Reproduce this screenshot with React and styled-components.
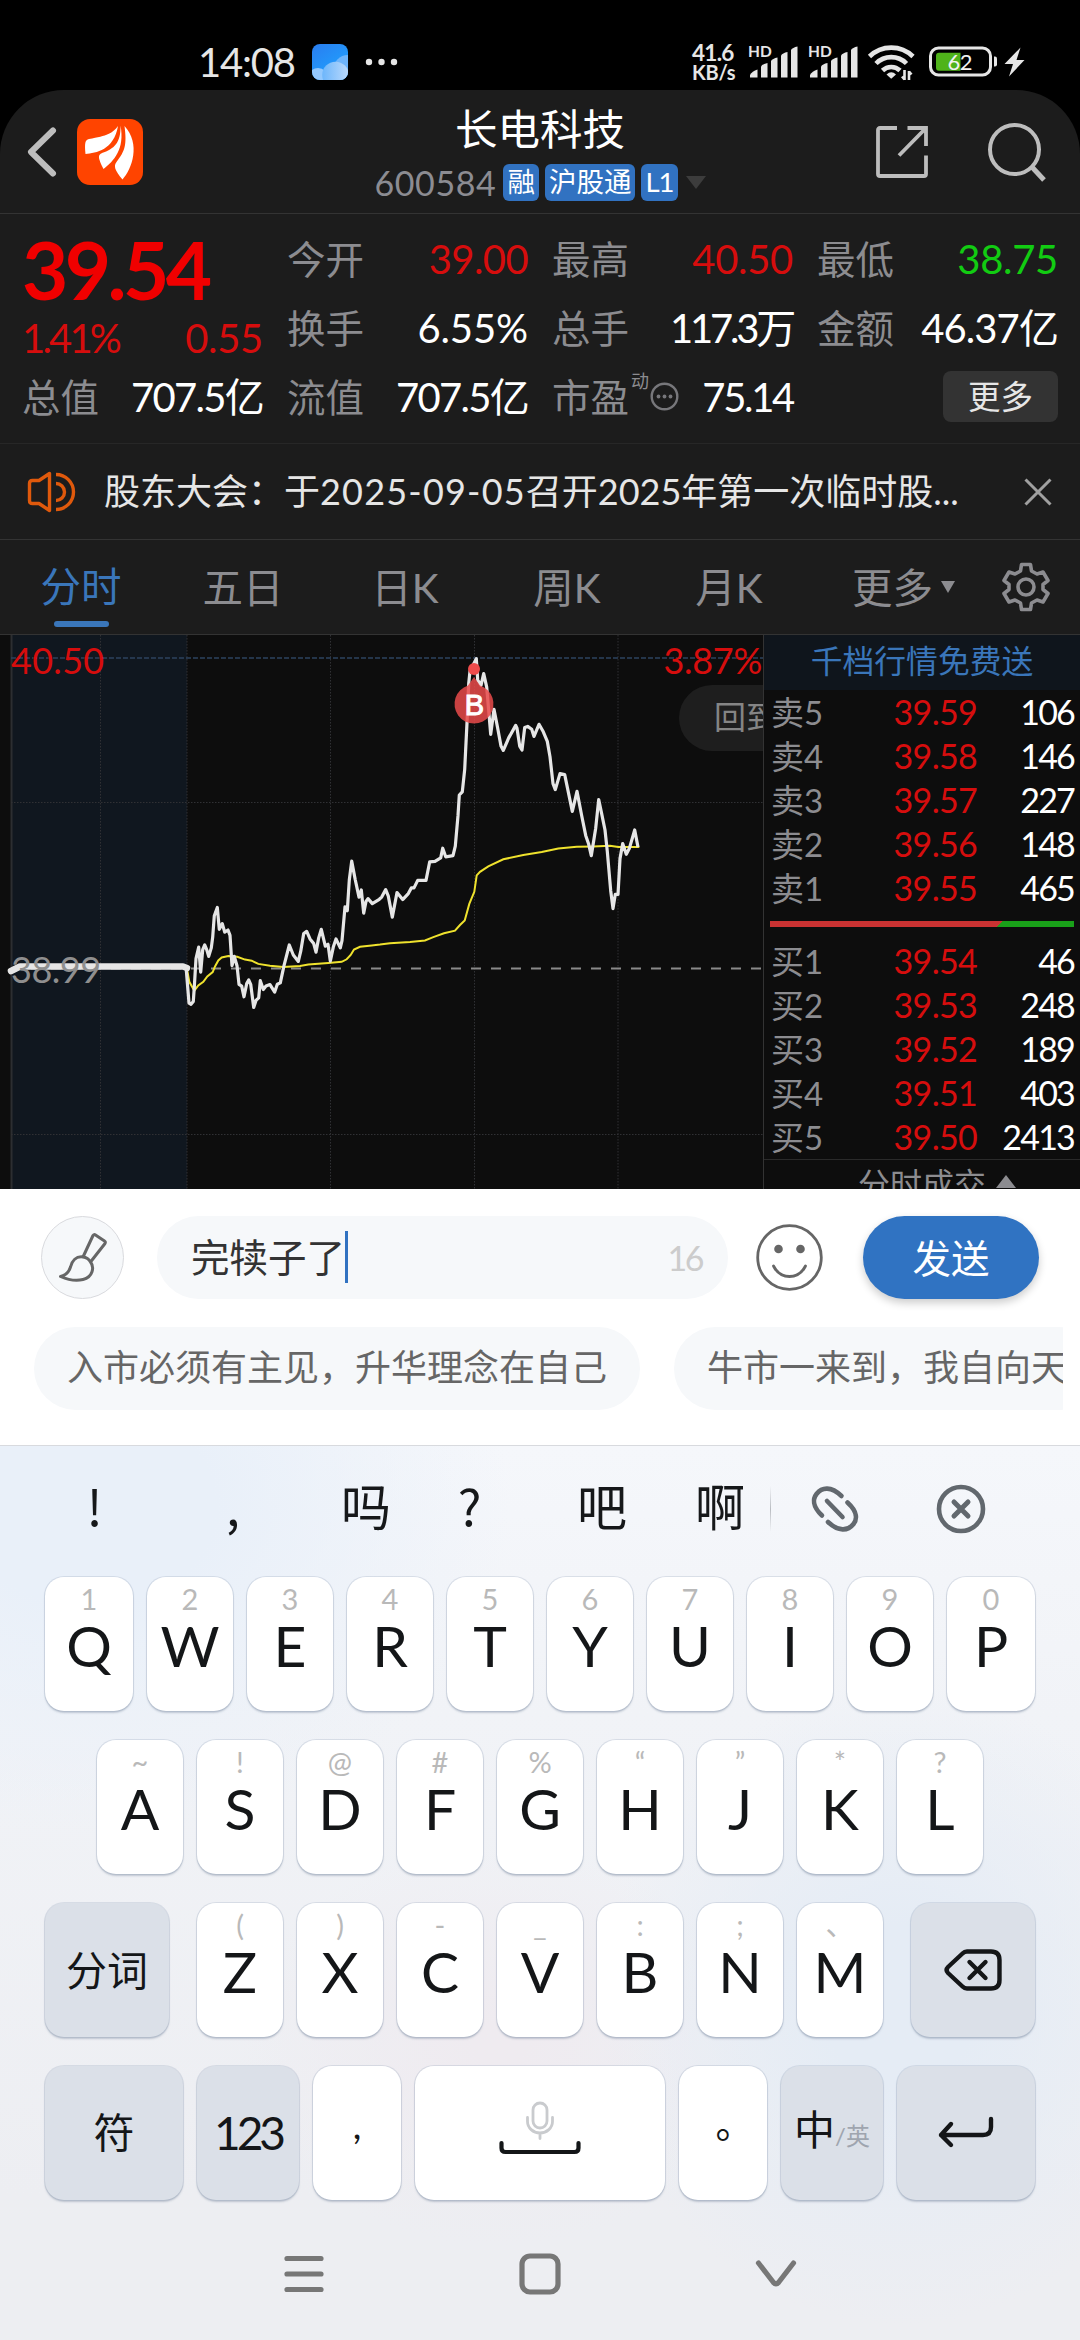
import React from 'react';
import styled, { createGlobalStyle } from 'styled-components';

const GlobalStyle = createGlobalStyle`
  * {
    box-sizing: border-box;
  }

  body {
    margin: 0;
    background: #000;
    font-family: Lato, "Noto Sans CJK SC", sans-serif;
    -webkit-font-smoothing: antialiased;
  }

  svg {
    display: block;
    flex-shrink: 0;
    overflow: visible;
  }
`;

const Screen = styled.div`
  width: 1080px;
  height: 2340px;
  display: flex;
  flex-direction: column;
  overflow: hidden;
  background: #000;
  white-space: nowrap;
`;

/* ---------- status bar ---------- */

const StatusBar = styled.div`
  height: 90px;
  flex-shrink: 0;
  display: flex;
  justify-content: space-between;
  padding: 42px 54px 0 198px;
  color: #e6e6e6;
`;

const StatusGroup = styled.div`
  display: flex;
  align-items: center;
  height: 40px;
`;

const Clock = styled.div`
  width: 114px;
  font-size: 40px;
  line-height: 40px;
  letter-spacing: -1.2px;
`;

const NetSpeed = styled.div`
  width: 56px;
  display: flex;
  flex-direction: column;
  font-size: 22.5px;
  font-weight: 700;
  line-height: 20px;
  letter-spacing: -0.7px;
`;

const NetUnit = styled.span`
  font-size: 20px;
  line-height: 18px;
  letter-spacing: -0.2px;
`;

const SignalWrap = styled.div`
  display: flex;
  align-items: flex-start;
  width: 50px;
  height: 34px;
  margin-right: 10px;
`;

const HdBadge = styled.div`
  width: 24px;
  margin-right: -24px;
  font-size: 15.5px;
  font-weight: 700;
  line-height: 13px;
`;

const BatteryText = styled.text`
  font-size: 22px;
  letter-spacing: -0.5px;
  fill: #f2f2f2;
`;

/* ---------- stock header ---------- */

const Stock = styled.div`
  height: 1099px;
  flex-shrink: 0;
  display: flex;
  flex-direction: column;
  overflow: hidden;
  border-radius: 64px 64px 0 0;
  background: #1c1c1c;
`;

const Header = styled.header`
  height: 124px;
  flex-shrink: 0;
  display: flex;
  align-items: center;
  justify-content: space-between;
  padding: 0 34px 0 27px;
  border-bottom: 1px solid #333;
`;

const HeaderSide = styled.div`
  width: ${(p) => (p.$end ? 170 : 177)}px;
  display: flex;
  align-items: center;
  justify-content: ${(p) => (p.$end ? 'space-between' : 'flex-start')};
  gap: 20px;
`;

const HeaderTitle = styled.div`
  display: flex;
  flex-direction: column;
  align-items: center;
  height: 124px;
  padding-top: 16px;
`;

const StockName = styled.h1`
  margin: 0;
  color: #fff;
  font-size: 42.5px;
  font-weight: 400;
  line-height: 46px;
`;

const StockMeta = styled.div`
  display: flex;
  align-items: center;
  gap: 6px;
  height: 38px;
  margin-top: 12px;
`;

const StockCode = styled.span`
  width: 123px;
  color: #8c8c92;
  font-size: 34px;
  line-height: 38px;
  letter-spacing: 0.6px;
`;

const Tag = styled.span`
  height: 37px;
  padding: 0 4px;
  border-radius: 6px;
  background: #3172c1;
  color: #fff;
  font-size: 27.5px;
  line-height: 36px;
  letter-spacing: ${(p) => p.$tight || 0};
`;

const Triangle = styled.span`
  width: 0;
  height: 0;
  margin-left: ${(p) => p.$gap}px;
  border: solid transparent;
  border-width: 0 ${(p) => p.$half}px;
  ${(p) => (p.$up ? 'border-bottom' : 'border-top')}: ${(p) => p.$tall}px solid ${(p) => p.$color};
`;

/* ---------- quote grid ---------- */

const Quote = styled.section`
  height: 230px;
  flex-shrink: 0;
  display: grid;
  grid-template-columns: repeat(4, 1fr);
  grid-template-rows: repeat(3, 69px);
  column-gap: 24px;
  padding: 10px 22px 0;
  border-bottom: 1px solid #272727;
`;

const PriceBlock = styled.div`
  grid-row: span 2;
  display: flex;
  flex-direction: column;
`;

const Price = styled.div`
  height: 91px;
  padding-top: 1px;
  color: #f00000;
  font-size: 80px;
  font-weight: 700;
  line-height: 88px;
  letter-spacing: -3.6px;
`;

const Change = styled.div`
  display: flex;
  justify-content: space-between;
  color: #d60d0d;
  font-size: 40px;
  line-height: 50px;
  letter-spacing: -2.8px;

  span + span {
    letter-spacing: -0.3px;
  }
`;

const Cell = styled.div`
  display: flex;
  align-items: center;
  justify-content: space-between;
`;

const Label = styled.span`
  display: flex;
  align-items: center;
  color: #8c8c90;
  font-size: 38.5px;
  line-height: 50px;
`;

const Sup = styled.sup`
  align-self: flex-start;
  font-size: 18px;
  line-height: 18px;
  margin: 0 1px 0 2px;
`;

const Value = styled.span`
  color: ${(p) => p.$color || '#fff'};
  font-size: 40px;
  line-height: 50px;
  letter-spacing: ${(p) => p.$track || '-0.6px'};
`;

const MoreButton = styled.button`
  justify-self: end;
  align-self: center;
  width: 115px;
  height: 51px;
  padding: 0;
  border: 0;
  border-radius: 8px;
  background: #333;
  color: #e6e6e6;
  font-family: inherit;
  font-size: 32.5px;
  line-height: 50px;
`;

/* ---------- notice ---------- */

const Notice = styled.div`
  height: 96px;
  flex-shrink: 0;
  display: flex;
  align-items: center;
  padding: 0 28px;
  border-bottom: 1px solid #333;
`;

const NoticeText = styled.p`
  flex: 1;
  margin: -2px 0 0 29px;
  color: #e6e6e6;
  font-size: 36px;
  line-height: 50px;
`;

const DateText = styled.span`
  letter-spacing: 1.2px;
`;

/* ---------- tabs ---------- */

const Tabs = styled.nav`
  height: 95px;
  flex-shrink: 0;
  display: flex;
  border-bottom: 1px solid #333;
`;

const Tab = styled.div`
  width: ${(p) => p.$w || 162}px;
  height: 94px;
  display: flex;
  align-items: center;
  justify-content: ${(p) => (p.$active ? 'flex-start' : 'center')};
  flex-direction: ${(p) => (p.$active ? 'column' : 'row')};
  color: ${(p) => (p.$active ? '#3a76ba' : '#8c8c90')};
  font-size: 40.5px;
  line-height: 93px;

  &::after {
    content: '';
    display: ${(p) => (p.$active ? 'block' : 'none')};
    width: 55px;
    height: 6px;
    margin-top: -12px;
    flex-shrink: 0;
    border-radius: 3px;
    background: #3a76ba;
  }
`;

/* ---------- chart + order book ---------- */

const Market = styled.section`
  height: 554px;
  flex-shrink: 0;
  display: flex;
  overflow: hidden;
  background: #0d0d0d;
`;

const ChartPane = styled.div`
  position: relative;
  width: 764px;
  height: 554px;
  flex-shrink: 0;
  overflow: hidden;
  border-right: 1px solid #333;
`;

const ChartLabel = styled.span`
  position: absolute;
  left: ${(p) => (p.$right ? 'auto' : '11px')};
  right: ${(p) => (p.$right ? '1px' : 'auto')};
  top: ${(p) => p.$top}px;
  color: ${(p) => p.$color};
  font-size: 36px;
  line-height: 40px;
  letter-spacing: ${(p) => p.$track};
`;

const BackPill = styled.div`
  position: absolute;
  left: 679px;
  top: 50px;
  width: 180px;
  height: 66px;
  padding-left: 35px;
  border-radius: 33px;
  background: #1e1e1e;
  color: #858585;
  font-size: 32px;
  line-height: 64px;
`;

const Book = styled.div`
  width: 316px;
  display: flex;
  flex-direction: column;
`;

const BookPromo = styled.div`
  height: 55px;
  flex-shrink: 0;
  background: #0f151c;
  color: #3a76ba;
  font-size: 31.8px;
  line-height: 53px;
  text-align: center;
`;

const BookSide = styled.div`
  flex-shrink: 0;
  padding: 0 6px 0 7px;
`;

const BookRow = styled.div`
  height: 44px;
  display: grid;
  grid-template-columns: 80px 1fr 97px;
  align-items: center;
  line-height: 44px;
  font-size: 34px;
`;

const BookLabel = styled.span`
  color: #8c8c90;
  font-size: 33px;
`;

const BookPrice = styled.span`
  color: #d60d0d;
  text-align: right;
  letter-spacing: -0.7px;
`;

const BookVolume = styled.span`
  color: #fff;
  text-align: right;
  letter-spacing: -1.8px;
`;

const RatioBar = styled.div`
  height: 6px;
  flex-shrink: 0;
  margin: 11px 6px 12px;
  background: linear-gradient(135deg, #c93232 0 75%, #19a019 75.2%);
`;

const BookFooter = styled.div`
  height: 30px;
  flex-shrink: 0;
  display: flex;
  padding: 6px 0 0 94px;
  border-top: 1px solid #2a2a2a;
  color: #8c8c90;
  font-size: 32px;
  line-height: 36px;

  ${Triangle} {
    margin-top: 9px;
  }
`;

/* ---------- comment composer ---------- */

const Composer = styled.section`
  height: 256px;
  flex-shrink: 0;
  padding-top: 27px;
  background: #fff;
`;

const ComposerRow = styled.div`
  display: flex;
  align-items: center;
  height: 83px;
  padding: 0 41px;
`;

const BrushButton = styled.div`
  width: 83px;
  height: 83px;
  display: flex;
  align-items: center;
  justify-content: center;
  border: 1px solid #d9dade;
  border-radius: 50%;
  background: #f6f8fa;
`;

const InputBox = styled.div`
  width: 571px;
  height: 83px;
  margin: 0 28px 0 33px;
  padding: 0 26px 0 34px;
  display: flex;
  align-items: center;
  border-radius: 42px;
  background: #f6f8fa;
  color: #333;
  font-size: 38.5px;
  line-height: 79px;
`;

const Caret = styled.span`
  width: 3px;
  height: 52px;
  margin-top: -2px;
  background: #3172c1;
`;

const Counter = styled.span`
  margin-left: auto;
  color: #ccc;
  font-size: 34px;
  letter-spacing: -2.5px;
`;

const SendButton = styled.button`
  width: 176px;
  height: 83px;
  margin-left: auto;
  padding: 0;
  border: 0;
  border-radius: 42px;
  background: #3073c2;
  box-shadow: 0 4px 8px rgba(0, 0, 0, 0.2);
  color: #fff;
  font-family: inherit;
  font-size: 38.5px;
  font-weight: 400;
  line-height: 78px;
`;

const Chips = styled.div`
  display: flex;
  gap: 34px;
  margin: 28px 17px 0 34px;
  overflow: hidden;
`;

const Chip = styled.div`
  height: 83px;
  flex-shrink: 0;
  padding: 0 33px;
  border-radius: 42px;
  background: #f6f8fa;
  color: #666;
  font-size: 36px;
  line-height: 80px;
`;

/* ---------- keyboard ---------- */

const Keyboard = styled.section`
  height: 895px;
  flex-shrink: 0;
  border-top: 1px solid #d8dade;
  background:
    radial-gradient(ellipse 420px 330px at 90px 60px, #e9f0f9 30%, rgba(233, 240, 249, 0) 100%),
    radial-gradient(ellipse 300px 320px at 900px 560px, #e5ecf5 25%, rgba(229, 236, 245, 0) 100%),
    radial-gradient(ellipse 260px 200px at 500px 600px, #efebf0 10%, rgba(239, 235, 240, 0) 100%),
    linear-gradient(#f5f7fb 0, #f1f3f7 30%, #edeef2 84%);
`;

const Candidates = styled.div`
  height: 125px;
  display: flex;
  align-items: center;
`;

const Candidate = styled.div`
  width: ${(p) => p.$w || 118}px;
  padding-right: ${(p) => p.$shift || 0}px;
  color: #16181a;
  font-family: "Noto Sans CJK SC", sans-serif;
  font-size: 50px;
  line-height: 120px;
  text-align: center;
  height: 129px;
`;

const CandidateDivider = styled.div`
  width: 1px;
  height: 46px;
  margin: 0 41px 0 -9px;
  background: linear-gradient(transparent, #b9bcc1, transparent);
`;

const KeyRow = styled.div`
  display: flex;
  gap: 14px;
  height: 134px;
  margin: ${(p) => p.$top}px 45px 0;
  padding: 0 ${(p) => p.$inset || 0}px;
`;

const Key = styled.div`
  width: ${(p) => p.$w || 86}px;
  margin-left: ${(p) => p.$gap || 0}px;
  height: 134px;
  flex-shrink: 0;
  display: flex;
  flex-direction: column;
  align-items: center;
  justify-content: ${(p) => (p.$letter ? 'flex-start' : 'center')};
  padding-bottom: ${(p) => p.$lift || 0}px;
  border-radius: 19px;
  background: ${(p) => (p.$dark ? '#dbe0e8' : '#fff')};
  box-shadow: 0 0 0 1px rgba(150, 165, 185, 0.28), 0 2px 2px rgba(110, 125, 150, 0.38);
  color: #141618;
  font-size: ${(p) => p.$size || 41}px;
  letter-spacing: ${(p) => p.$track || 0};
`;

const Hint = styled.span`
  margin-top: 4px;
  font-size: 29px;
  line-height: 36px;
  color: #b9b9b9;
`;

const Letter = styled.span`
  color: #141618;
  font-size: 57px;
  line-height: 56px;
`;

const Comma = styled.span`
  height: 60px;
  margin-top: -2px;
  font-size: 38px;
  line-height: 44px;
`;

const FullStop = styled.span`
  padding-left: 23px;
  font-family: "Noto Sans CJK SC", sans-serif;
  font-size: 38px;
  line-height: 44px;
  margin-top: -22px;
`;

const LangRow = styled.span`
  display: flex;
  align-items: baseline;
  margin-top: -12px;

  small {
    color: #9fa5af;
    font-size: 24px;
  }
`;

const NavBar = styled.div`
  display: flex;
  align-items: center;
  justify-content: center;
  gap: 194px;
  height: 140px;
  padding-top: 8px;
`;

/* ---------- icons ---------- */

const SignalIcon = () => (
  <SignalWrap>
    <HdBadge>HD</HdBadge>
    <svg width="50" height="34" viewBox="0 0 50 34" fill="#e6e6e6">
      <path d="M2 32.500v-2.500q2-4 7.500-5.500v8z" />
      <path d="M13 32.500v-11q1.500-2.500 6.500-3.500v14.500z" />
      <path d="M23 32.500v-16.500q1.500-2.500 6.500-3.500v20z" />
      <path d="M33 32.500v-22q1.500-2.500 6.500-3.500v25.500z" />
      <path d="M43 32.500v-27.500q1.500-2.500 6.500-3.500v31z" />
    </svg>
  </SignalWrap>
);

const WifiIcon = () => (
  <svg width="47" height="34" viewBox="0 0 47 34" fill="none" stroke="#e6e6e6" strokeWidth="4.600">
    <path d="M1.500 11.500a31 31 0 0 1 43.500 0" />
    <path d="M8 18.500a21.500 21.500 0 0 1 30.500 0" />
    <path d="M14.500 25.500a12.500 12.500 0 0 1 17.500 0" />
    <path d="M18.500 29.500q4.800-4.500 9.500 0l-4.800 4.300z" fill="#e6e6e6" stroke="none" />
    <path d="M36.500 25v10M34 31.500l2.500 3M41 35v-9M43.500 29.500l-2.500-3" strokeWidth="2.600" />
  </svg>
);

const BatteryIcon = () => (
  <svg width="97" height="32" viewBox="0 0 97 32">
    <rect x="1.500" y="2" width="60" height="27" rx="8" fill="none" stroke="#e6e6e6" strokeWidth="3" />
    <path d="M10 6.700h21.500v18h-21.500q-3 0-3-3v-12q0-3 3-3z" fill="#4fb31a" />
    <BatteryText x="18.500" y="23.500">62</BatteryText>
    <path d="M65 10.500h1q2 0 2 2v6q0 2-2 2h-1z" fill="#e6e6e6" />
    <path d="M91.500 1.500L75.500 18h8.500L80 30.500 95.500 14h-8z" fill="#e6e6e6" />
  </svg>
);

const WeatherIcon = () => (
  <svg width="36" height="36" viewBox="0 0 36 36">
    <defs>
      <linearGradient id="sky" x1="0" y1="0" x2="0.700" y2="1">
        <stop offset="0" stopColor="#2a7df0" />
        <stop offset="1" stopColor="#1ea4ff" />
      </linearGradient>
      <linearGradient id="cloud" x1="0" y1="0" x2="1" y2="0">
        <stop offset="0" stopColor="#6db6fb" />
        <stop offset="1" stopColor="#bcdafc" />
      </linearGradient>
      <clipPath id="tile"><rect width="36" height="36" rx="8" /></clipPath>
    </defs>
    <g clipPath="url(#tile)">
      <rect width="36" height="36" fill="url(#sky)" />
      <circle cx="36" cy="26" r="15" fill="#6db4fb" />
      <circle cx="6" cy="34" r="10" fill="#93c8fd" />
      <circle cx="23.500" cy="31" r="13.300" fill="url(#cloud)" />
    </g>
  </svg>
);

const LogoIcon = () => (
  <svg width="66" height="66" viewBox="0 0 66 66">
    <rect width="66" height="66" rx="13" fill="#ff4400" />
    <g fill="#fff">
      <path d="M41 7C36 14 30 17 12 20c-4 1-4.500 4-3.500 15C19 34 37 31 41 7z" />
      <path d="M43.500 6.500C44 24 37 30 25 34c-4 2-4.500 4 1.500 16C37 42 48 30 43.500 6.500z" />
      <path d="M47.500 7C50 26 48 32 39.500 43c-3 4-2 8 6 17.500C55 50 64 25 47.500 7z" />
    </g>
  </svg>
);

const BackIcon = () => (
  <svg width="30" height="52" viewBox="0 0 30 52" fill="none" stroke="#bdbdbd" strokeWidth="6" strokeLinecap="round" strokeLinejoin="round">
    <path d="M26 4.500L4 26l22 21.500" />
  </svg>
);

const ShareIcon = () => (
  <svg width="52" height="52" viewBox="0 0 52 52" fill="none" stroke="#bdbdbd" strokeWidth="3.800">
    <path d="M21 2H4q-2 0-2 2v44q0 2 2 2h44q2 0 2-2V29.500" />
    <path d="M31.500 2H50v18M49.500 2.500L23 29.500" />
  </svg>
);

const SearchIcon = () => (
  <svg width="58" height="58" viewBox="0 0 58 58" fill="none" stroke="#bdbdbd" strokeWidth="4">
    <circle cx="26.500" cy="26.500" r="24.500" />
    <path d="M43.500 43.500L56 57" strokeWidth="5" />
  </svg>
);

const TipIcon = () => (
  <svg width="29" height="29" viewBox="0 0 29 29" fill="#77777b">
    <circle cx="14.500" cy="14.500" r="12.800" fill="none" stroke="#77777b" strokeWidth="2.400" />
    <circle cx="8.500" cy="14.500" r="1.900" />
    <circle cx="14.500" cy="14.500" r="1.900" />
    <circle cx="20.500" cy="14.500" r="1.900" />
  </svg>
);

const SpeakerIcon = () => (
  <svg width="47" height="40" viewBox="0 0 47 40" fill="none" stroke="#e0590c" strokeWidth="3.400">
    <path d="M21.500 1.500v37L11 31.500H4.500q-3 0-3-3v-17q0-3 3-3H11z" strokeLinejoin="round" />
    <path d="M28 2.500a17.500 17.500 0 0 1 0 35M28 11.500a8.500 8.500 0 0 1 0 17" />
  </svg>
);

const CloseIcon = () => (
  <svg width="28" height="28" viewBox="0 0 28 28" stroke="#a0a0a0" strokeWidth="3">
    <path d="M1.500 1.500l25 25M26.500 1.500l-25 25" />
  </svg>
);

const GearIcon = () => (
  <svg width="48" height="50" viewBox="0 0 48 50" fill="none" stroke="#8c8c90" strokeWidth="3.600" strokeLinejoin="round">
    <path d="M19.500 2.500h9l1 6.500 5.500 3L41 10l5 8.500L41 22.500v5l5 4-5 8.500-6-2-5.500 3-1 6.500h-9l-1-6.500-5.500-3-6 2-5-8.500 5-4v-5l-5-4L7 10l6 2 5.500-3z" />
    <circle cx="24" cy="25" r="8" />
  </svg>
);

const BrushIcon = () => (
  <svg width="48" height="50" viewBox="0 0 48 50" fill="none" stroke="#666" strokeWidth="3" strokeLinejoin="round">
    <path d="M24 24L34 2.500q1-1.500 2.500-0.500l9 6q1.500 1 .5 2.500L31.500 29" />
    <path d="M24 24c-7-1-11 4-12.500 10Q9 42 1.500 43.500 14 49 24 46.500C34 44 35.500 34 31.500 29Q29 24.500 24 24z" />
  </svg>
);

const SmileIcon = () => (
  <svg width="67" height="67" viewBox="0 0 67 67" fill="none" stroke="#666" strokeWidth="2.800">
    <circle cx="33.500" cy="33.500" r="31.800" />
    <circle cx="22.500" cy="25" r="4.300" fill="#666" stroke="none" />
    <circle cx="44.500" cy="25" r="4.300" fill="#666" stroke="none" />
    <path d="M17.500 42c7 14 25 14 32 0" strokeLinecap="round" />
  </svg>
);

const LinkIcon = () => (
  <svg width="46" height="46" viewBox="0 0 46 46" fill="none" stroke="#62686e" strokeWidth="4.600" strokeLinecap="round">
    <path d="M10 29.500C0 20 1 12.500 4.500 8 10 1 19 0 29.500 10" />
    <path d="M35.500 16.500C46 26 45 33.500 41.500 38 36 45 26.500 46 16 36" />
    <path d="M15 15l15.500 16" />
  </svg>
);

const DismissIcon = () => (
  <svg width="50" height="50" viewBox="0 0 50 50" fill="none" stroke="#62686e" strokeWidth="4.600" strokeLinecap="round">
    <circle cx="25" cy="25" r="22" />
    <path d="M18 18l14 14M32 18L18 32" strokeWidth="5" />
  </svg>
);

const BackspaceIcon = () => (
  <svg width="58" height="42" viewBox="0 0 58 42" fill="none" stroke="#141618" strokeWidth="4.400" strokeLinecap="round" strokeLinejoin="round">
    <path d="M23 2.500h24q8.500 0 8.500 8.500v20q0 8.500-8.500 8.500H23q-2.500 0-4.500-2L4 24Q1 21 4 18L18.500 4.500q2-2 4.500-2z" />
    <path d="M25.500 13l16 16M41.500 13l-16 16" />
  </svg>
);

const EnterIcon = () => (
  <svg width="56" height="32" viewBox="0 0 56 32" fill="none" stroke="#141618" strokeWidth="4.400" strokeLinecap="round" strokeLinejoin="round">
    <path d="M53 2v8q0 8-8 8H3M13 7L3 18l10 10" />
  </svg>
);

const SpaceIcon = () => (
  <svg width="82" height="56" viewBox="0 0 82 56" fill="none" strokeLinecap="round">
    <g stroke="#c9cbce" strokeWidth="2.800">
      <rect x="34" y="-2" width="14" height="25" rx="7" />
      <path d="M28.500 12.500v4a12.500 11.500 0 0 0 25 0v-4M41 28.500v5" />
    </g>
    <path d="M2.500 38v5q0 4 4 4h69q4 0 4-4v-5" stroke="#141618" strokeWidth="4.200" />
  </svg>
);

const NavIcon = styled.svg.attrs({
  width: 42,
  height: 42,
  viewBox: '0 0 42 42',
  fill: 'none',
  stroke: '#777',
  strokeWidth: 5.2,
  strokeLinecap: 'round',
  strokeLinejoin: 'round',
})``;

/* ---------- intraday chart ---------- */

// Samples are stored on a 2292 x 1551 canvas and scaled down to the pane.
const X_UNIT = 3;
const Y_UNIT = 2.8;

const toPoints = (flat, dx = 0) => {
  const out = [];
  for (let i = 0; i < flat.length; i += 2) {
    out.push(`${((flat[i] + dx) / X_UNIT).toFixed(1)},${((flat[i + 1] - 14) / Y_UNIT).toFixed(1)}`);
  }
  return out.join(' ');
};

const PRICE_AM = [
  558, 942, 567, 1045, 573, 1048, 580, 1040, 583, 1000, 588, 920, 596, 888, 602, 958, 608, 895, 614, 882,
  620, 895, 626, 914, 634, 890, 638, 860, 643, 800, 652, 777, 658, 838, 667, 822, 674, 846, 684, 840,
  690, 855, 696, 940, 703, 914, 711, 940, 717, 992, 725, 997, 732, 1027, 740, 990, 746, 980, 752, 992,
  761, 1057, 768, 1037, 776, 1030, 781, 982, 790, 1007, 798, 997, 810, 993, 824, 1014, 832, 992, 841, 988,
  852, 940, 868, 882, 880, 910, 895, 928, 902, 900, 911, 850, 920, 844, 930, 865, 941, 878, 948, 902,
  956, 862, 964, 838, 976, 885, 984, 880, 991, 927, 1000, 888, 1008, 865, 1021, 890, 1026, 870, 1035, 775,
  1042, 786, 1048, 700, 1055, 647, 1066, 700, 1077, 748, 1084, 728, 1091, 793, 1098, 760, 1104, 752, 1117, 766,
  1138, 754,
];

const PRICE_PM = [
  5, 748, 17, 727, 25, 745, 37, 804, 51, 735, 68, 755, 85, 738, 94, 722, 102, 722, 113, 701,
  138, 701, 149, 649, 165, 648, 182, 638, 188, 611, 197, 635, 219, 632, 226, 605, 234, 520, 238, 462,
  247, 453, 254, 390, 261, 260, 266, 150, 270, 115, 289, 80, 293, 140, 303, 155, 311, 122, 320, 160,
  332, 292, 342, 222, 353, 275, 363, 325, 370, 337, 386, 302, 407, 267, 411, 275, 419, 325, 426, 336,
  434, 273, 443, 270, 455, 278, 462, 298, 477, 264, 490, 285, 502, 312, 510, 355, 519, 430, 526, 447,
  540, 402, 554, 405, 577, 508, 591, 452, 605, 520, 617, 575, 626, 600, 634, 632, 647, 555, 656, 475,
  665, 515, 675, 560, 682, 620, 692, 730, 699, 780, 706, 740, 714, 740, 720, 640, 728, 598, 739, 628,
  748, 612, 764, 560, 774, 608,
];

const AVG_AM = [
  560, 945, 568, 985, 583, 1010, 595, 995, 610, 985, 622, 970, 638, 958, 645, 942, 655, 925, 665, 917,
  685, 913, 712, 915, 735, 923, 755, 926, 775, 935, 810, 940, 850, 944, 900, 941, 925, 937, 985, 932,
  1025, 929, 1040, 922, 1052, 910, 1062, 895, 1080, 887, 1115, 883,
];

const AVG_PM = [
  0, 881, 30, 877, 90, 874, 135, 869, 160, 860, 192, 849, 225, 842, 240, 826, 254, 813, 268, 767,
  283, 733, 290, 687, 300, 677, 325, 662, 370, 642, 430, 630, 485, 622, 535, 612, 590, 607, 640, 606,
  690, 604, 715, 608, 778, 608,
];

const PM_OFFSET = 1140;
const pricePoints = `${toPoints(PRICE_AM)} ${toPoints(PRICE_PM, PM_OFFSET)}`;
const avgPoints = `${toPoints(AVG_AM)} ${toPoints(AVG_PM, PM_OFFSET)}`;

const MarkerText = styled.text`
  font-family: "Liberation Sans", sans-serif;
  font-size: 29px;
  font-weight: 400;
  fill: #fff;
  stroke: #fff;
  stroke-width: 1px;
  text-anchor: middle;
`;

const Chart = () => (
  <ChartPane>
    <svg width="764" height="554" viewBox="0 0 764 554" fill="none">
      <rect x="11" width="176" height="554" fill="#10171f" />
      <path d="M11.500 0V554" stroke="#2c2e31" strokeWidth="2" />
      <g stroke="#303134" strokeDasharray="1.500 1.500">
        <path d="M100.500 0V554M187 0V554M330.500 0V554M474.500 0V554M618 0V554" />
        <path d="M11 167.500H764M11 499.500H764" />
      </g>
      <path d="M11 23H764" stroke="#2c435f" strokeWidth="1.500" strokeDasharray="5 2" />
      <path d="M11 333.500H764" stroke="#8a8a8a" strokeWidth="2" strokeDasharray="10 10" />
      <polyline points={avgPoints} stroke="#efe22d" strokeWidth="2" />
      <polyline points="11,336 17,333 20,331.500 183,331.500 187,333" stroke="#e6e6e6" strokeWidth="6.500" strokeLinecap="round" strokeLinejoin="round" />
      <polyline points={pricePoints} stroke="#e6e6e6" strokeWidth="3.200" strokeLinejoin="round" />
      <path d="M474 42l6 8.500a19.500 19.500 0 1 1-12 0z" fill="#e84a4a" fillOpacity="0.860" />
      <circle cx="474" cy="34" r="6" fill="#ee4b4b" />
      <MarkerText x="474.500" y="79.500">B</MarkerText>
    </svg>
    <ChartLabel $top={5} $color="#d60d0d" $track="0.300px">40.50</ChartLabel>
    <ChartLabel $top={5} $color="#d60d0d" $right $track="-0.300px">3.87%</ChartLabel>
    <ChartLabel $top={314} $color="#8f8f8f" $track="-0.500px">38.99</ChartLabel>
    <BackPill>回到</BackPill>
  </ChartPane>
);

/* ---------- data ---------- */

const RED = '#d60d0d';
const GREEN = '#12cc12';

const TABS = ['五日', '日K', '周K', '月K'];

const SELLS = [
  ['卖5', '39.59', '106'],
  ['卖4', '39.58', '146'],
  ['卖3', '39.57', '227'],
  ['卖2', '39.56', '148'],
  ['卖1', '39.55', '465'],
];

const BUYS = [
  ['买1', '39.54', '46'],
  ['买2', '39.53', '248'],
  ['买3', '39.52', '189'],
  ['买4', '39.51', '403'],
  ['买5', '39.50', '2413'],
];

const ROW_1 = ['Q1', 'W2', 'E3', 'R4', 'T5', 'Y6', 'U7', 'I8', 'O9', 'P0'];
const ROW_2 = ['A~', 'S!', 'D@', 'F#', 'G%', 'H“', 'J”', 'K*', 'L?'];
const ROW_3 = ['Z(', 'X)', 'C-', 'V_', 'B:', 'N;', 'M、'];

const Metric = ({ label, value, color, track }) => (
  <Cell>
    <Label>{label}</Label>
    <Value $color={color} $track={track}>{value}</Value>
  </Cell>
);

const Orders = ({ rows }) => (
  <BookSide>
    {rows.map(([label, price, volume]) => (
      <BookRow key={label}>
        <BookLabel>{label}</BookLabel>
        <BookPrice>{price}</BookPrice>
        <BookVolume>{volume}</BookVolume>
      </BookRow>
    ))}
  </BookSide>
);

const LetterKey = ({ chars, w, gap }) => (
  <Key $letter $w={w} $gap={gap}>
    <Hint>{chars[1]}</Hint>
    <Letter>{chars[0]}</Letter>
  </Key>
);

const App = () => {
  return (
    <Screen>
      <GlobalStyle />
      <StatusBar>
        <StatusGroup>
          <Clock>14:08</Clock>
          <WeatherIcon />
          <svg width="50" height="8" viewBox="0 0 50 8" fill="#e6e6e6">
            <circle cx="21" cy="4" r="3.200" />
            <circle cx="33.500" cy="4" r="3.200" />
            <circle cx="46" cy="4" r="3.200" />
          </svg>
        </StatusGroup>
        <StatusGroup>
          <NetSpeed>
            <span>41.6</span>
            <NetUnit>KB/s</NetUnit>
          </NetSpeed>
          <SignalIcon />
          <SignalIcon />
          <WifiIcon />
          <svg width="14" height="1" />
          <BatteryIcon />
        </StatusGroup>
      </StatusBar>

      <Stock>
        <Header>
          <HeaderSide>
            <BackIcon />
            <LogoIcon />
          </HeaderSide>
          <HeaderTitle>
            <StockName>长电科技</StockName>
            <StockMeta>
              <StockCode>600584</StockCode>
              <Tag>融</Tag>
              <Tag>沪股通</Tag>
              <Tag $tight="-1px">L1</Tag>
              <Triangle $gap={2} $half={10} $tall={13} $color="#3c3c3c" />
            </StockMeta>
          </HeaderTitle>
          <HeaderSide $end>
            <ShareIcon />
            <SearchIcon />
          </HeaderSide>
        </Header>

        <Quote>
          <PriceBlock>
            <Price>39.54</Price>
            <Change>
              <span>1.41%</span>
              <span>0.55</span>
            </Change>
          </PriceBlock>
          <Metric label="今开" value="39.00" color={RED} />
          <Metric label="最高" value="40.50" color={RED} track="-0.300px" />
          <Metric label="最低" value="38.75" color={GREEN} track="-0.300px" />
          <Metric label="换手" value="6.55%" track="-0.100px" />
          <Metric label="总手" value="117.3万" track="-3.200px" />
          <Metric label="金额" value="46.37亿" track="-0.900px" />
          <Metric label="总值" value="707.5亿" track="-1.700px" />
          <Metric label="流值" value="707.5亿" track="-1.700px" />
          <Cell>
            <Label>
              市盈<Sup>动</Sup>
              <TipIcon />
            </Label>
            <Value $track="-2.300px">75.14</Value>
          </Cell>
          <MoreButton>更多</MoreButton>
        </Quote>

        <Notice>
          <SpeakerIcon />
          <NoticeText>
            股东大会：于<DateText>2025-09-05</DateText>召开2025年第一次临时股...
          </NoticeText>
          <CloseIcon />
        </Notice>

        <Tabs>
          <Tab $active>分时</Tab>
          {TABS.map((name) => (
            <Tab key={name}>{name}</Tab>
          ))}
          <Tab $w={187}>
            更多
            <Triangle $gap={8} $half={7} $tall={12} $color="#8c8c90" />
          </Tab>
          <Tab $w={58}>
            <GearIcon />
          </Tab>
        </Tabs>

        <Market>
          <Chart />
          <Book>
            <BookPromo>千档行情免费送</BookPromo>
            <Orders rows={SELLS} />
            <RatioBar />
            <Orders rows={BUYS} />
            <BookFooter>
              分时成交
              <Triangle $up $gap={10} $half={10} $tall={13} $color="#8c8c90" />
            </BookFooter>
          </Book>
        </Market>
      </Stock>

      <Composer>
        <ComposerRow>
          <BrushButton>
            <BrushIcon />
          </BrushButton>
          <InputBox>
            完犊子了
            <Caret />
            <Counter>16</Counter>
          </InputBox>
          <SmileIcon />
          <SendButton>发送</SendButton>
        </ComposerRow>
        <Chips>
          <Chip>入市必须有主见，升华理念在自己</Chip>
          <Chip>牛市一来到，我自向天</Chip>
        </Chips>
      </Composer>

      <Keyboard>
        <Candidates>
          <Candidate $w={189}>!</Candidate>
          <Candidate $shift={30}>,</Candidate>
          <Candidate>吗</Candidate>
          <Candidate $shift={29}>?</Candidate>
          <Candidate>吧</Candidate>
          <Candidate>啊</Candidate>
          <CandidateDivider />
          <LinkIcon />
          <svg width="78" height="1" />
          <DismissIcon />
        </Candidates>
        <KeyRow $top={6}>
          {ROW_1.map((chars, i) => (
            <LetterKey key={chars} chars={chars} w={i === 0 || i === 9 ? 88 : 86} />
          ))}
        </KeyRow>
        <KeyRow $top={29} $inset={52}>
          {ROW_2.map((chars) => (
            <LetterKey key={chars} chars={chars} />
          ))}
        </KeyRow>
        <KeyRow $top={29}>
          <Key $dark $w={124} $lift={5}>分词</Key>
          {ROW_3.map((chars, i) => (
            <LetterKey key={chars} chars={chars} gap={i === 0 ? 14 : 0} />
          ))}
          <Key $dark $w={124} $gap={14}>
            <BackspaceIcon />
          </Key>
        </KeyRow>
        <KeyRow $top={29}>
          <Key $dark $w={138} $lift={6}>符</Key>
          <Key $dark $w={102} $size={46} $track="-4px" $lift={2}>123</Key>
          <Key $w={88}>
            <Comma>,</Comma>
          </Key>
          <Key $w={250}>
            <SpaceIcon />
          </Key>
          <Key $w={88}>
            <FullStop>。</FullStop>
          </Key>
          <Key $dark $w={102}>
            <LangRow>
              中<small>/英</small>
            </LangRow>
          </Key>
          <Key $dark $w={138}>
            <EnterIcon />
          </Key>
        </KeyRow>
        <NavBar>
          <NavIcon>
            <path d="M4 5.500h34M4 21h34M4 36.500h34" />
          </NavIcon>
          <NavIcon>
            <rect x="3" y="3" width="36" height="36" rx="8" />
          </NavIcon>
          <NavIcon>
            <path d="M3.500 10l15 19.500q2.500 3 5 0L38.500 10" />
          </NavIcon>
        </NavBar>
      </Keyboard>
    </Screen>
  );
};

export default App;
